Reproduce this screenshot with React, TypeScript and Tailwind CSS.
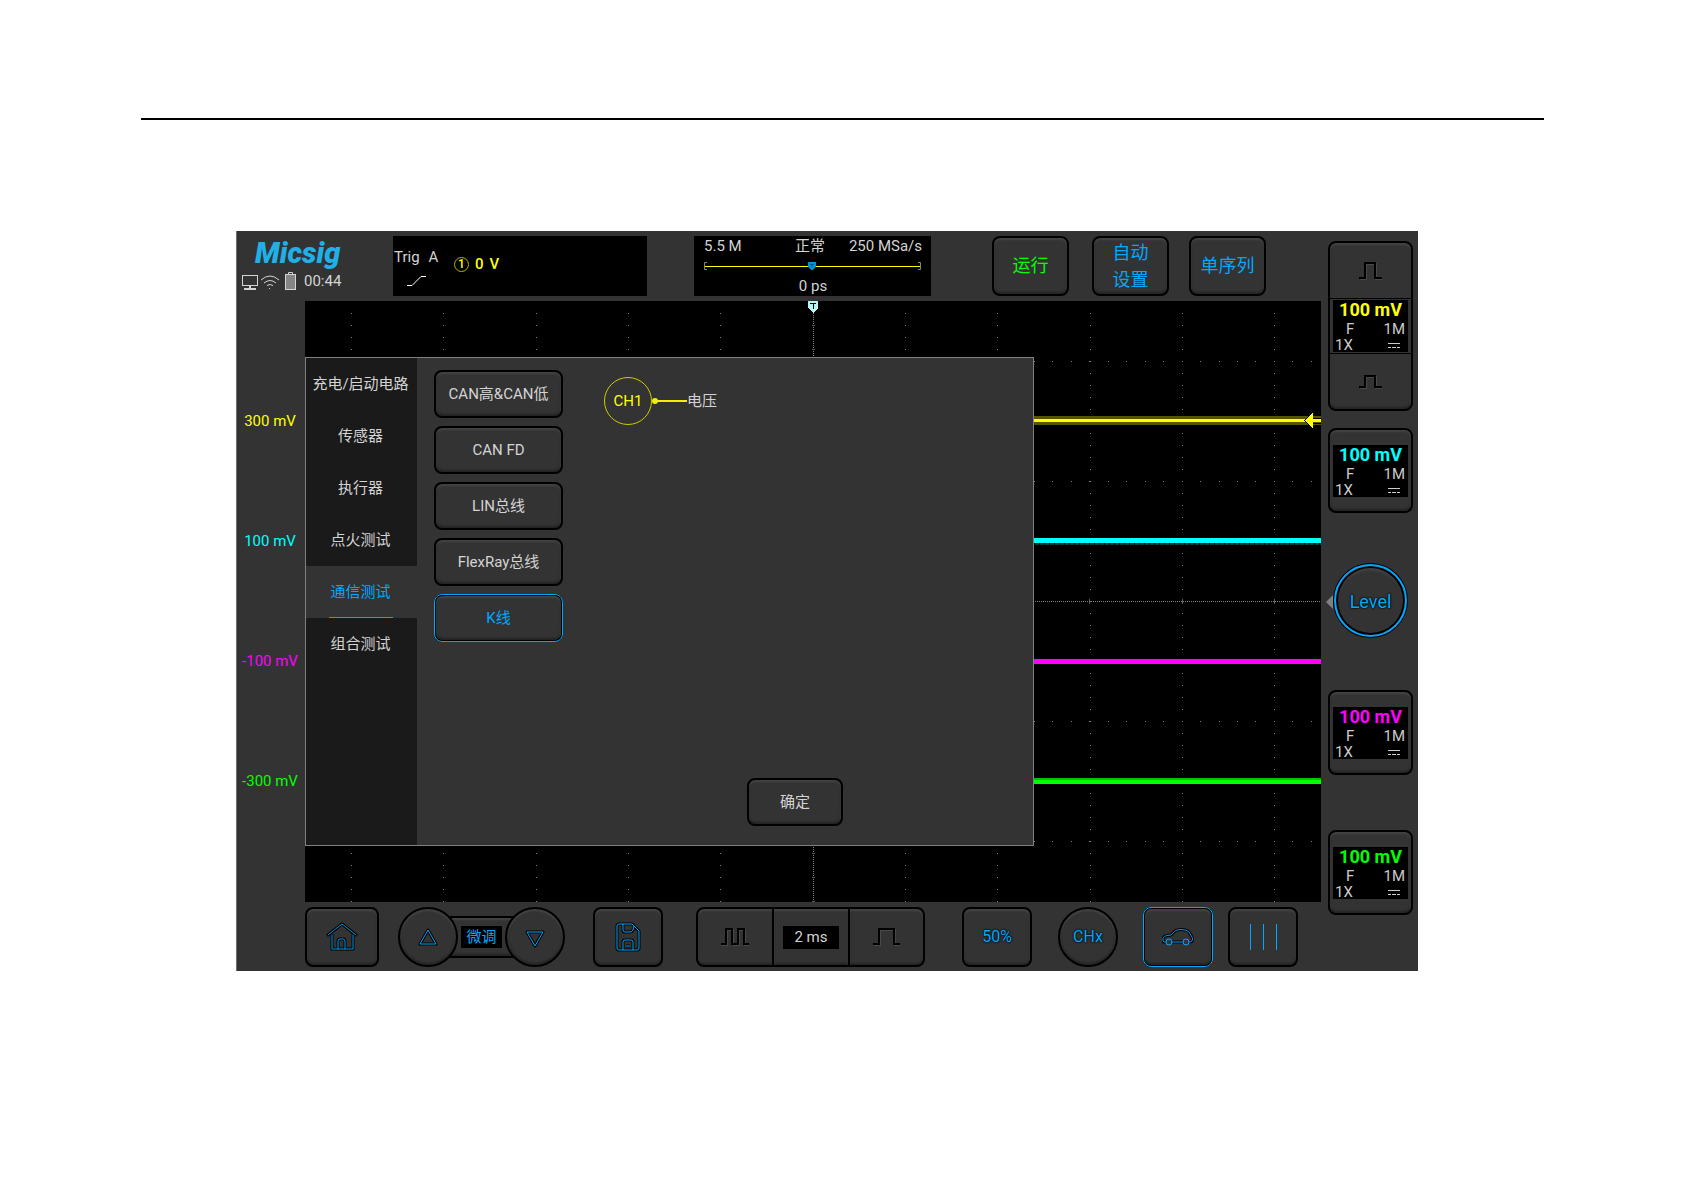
import { useState } from "react";
import type { ReactNode } from "react";
import clsx from "clsx";

const categories = ["充电/启动电路", "传感器", "执行器", "点火测试", "通信测试", "组合测试"];
const busTests = ["CAN高&CAN低", "CAN FD", "LIN总线", "FlexRay总线", "K线"];

const levels = [
  { label: "300 mV", color: "text-[#ffff00]" },
  { label: "100 mV", color: "text-[#00ffff]" },
  { label: "-100 mV", color: "text-[#ff00ff]" },
  { label: "-300 mV", color: "text-[#00ff00]" },
];

const keyStyle =
  "flex items-center justify-center border-2 border-black bg-[#333333] shadow-[inset_0_2px_2px_#444444,inset_0_-2px_2px_#242424]";

interface KeyProps {
  label: string;
  className?: string;
  children: ReactNode;
}

const Key = ({ label, className, children }: KeyProps) => (
  <button aria-label={label} className={clsx(keyStyle, "shrink-0", className)}>
    {children}
  </button>
);

const ChannelReadout = ({ color }: { color: string }) => (
  <span className="block h-[52px] w-[75px] bg-black px-[2px] text-left text-[15px] text-[#cccccc]">
    <span className={clsx("block text-center text-lg leading-[20px] font-bold", color)}>100 mV</span>
    <span className="flex justify-between pr-px pl-[11px] leading-[18px]">
      <span>F</span>
      <span>1M</span>
    </span>
    <span className="flex items-center justify-between pr-[6px] leading-[14px]">
      <span>1X</span>
      <svg width="12" height="6" viewBox="0 0 12 6" shapeRendering="crispEdges">
        <path d="M0 1.5H12M0 5.5H3M4 5.5H8M9 5.5H12" stroke="#cccccc" fill="none" />
      </svg>
    </span>
  </span>
);

// one square pulse, drawn black with a faint light edge
const Pulse = ({ d, width, height }: { d: string; width: number; height: number }) => (
  <svg width={width} height={height} viewBox={`0 0 ${width} ${height}`} fill="none">
    <path d={d} stroke="#484848" strokeWidth="2" transform="translate(1 1)" />
    <path d={d} stroke="#000000" strokeWidth="2" />
  </svg>
);

const StatusIcons = () => (
  <svg width="56" height="20" viewBox="0 0 56 20" fill="none" stroke="#d4d4d4">
    <rect x="0.5" y="4.5" width="15" height="10" />
    <path d="M8 15V18M2 18H14" strokeWidth="2" />
    <path d="M19 9Q28 1 37 9M22 12Q28 7 34 12M25 14.5Q28 12.5 31 14.5" />
    <rect x="27" y="17" width="1" height="1" fill="#d4d4d4" stroke="none" />
    <rect x="43.5" y="3.5" width="10" height="15" fill="#858585" />
    <path d="M46.5 3V1.5H50.5V3" />
  </svg>
);

const TopBar = () => (
  <header className="flex h-[70px] items-start pt-[5px]">
    <div className="w-[156px] shrink-0 pl-[5px]">
      <div className="pl-[13px] text-[29px] leading-[35px] font-black text-[#1fb0e8] italic">Micsig</div>
      <div className="flex items-center gap-[6px] text-[15px] leading-[20px] text-[#d4d4d4]">
        <StatusIcons />
        <span>00:44</span>
      </div>
    </div>

    <div className="flex h-[60px] w-[254px] shrink-0 bg-black text-[15px] text-[#d4d4d4]">
      <div className="w-[61px] pl-px">
        <div className="flex gap-[9px] pt-[11px] leading-[20px]">
          <span>Trig</span>
          <span>A</span>
        </div>
        <svg className="mt-[8px] ml-[13px]" width="20" height="12" viewBox="0 0 20 12" fill="none">
          <path d="M0 10.5H5L14 1.5H19" stroke="#ffffff" />
        </svg>
      </div>
      <div className="flex h-[56px] items-center gap-[6px] font-medium text-[#ffff00]">
        <span className="flex h-[15px] w-[15px] items-center justify-center rounded-full border border-[#b5b500] text-xs leading-none">
          1
        </span>
        <span>0</span>
        <span>V</span>
      </div>
    </div>

    <div className="ml-[47px] h-[60px] w-[237px] shrink-0 bg-black pr-[9px] pl-[10px] text-[15px] text-[#d4d4d4]">
      <div className="flex justify-between leading-[20px]">
        <span className="w-[90px]">5.5 M</span>
        <span>正常</span>
        <span className="w-[96px] text-right">250 MSa/s</span>
      </div>
      <svg className="mt-[5px] w-full" height="10" viewBox="0 0 218 10" fill="none">
        <path d="M3 1.5H0.5V8.5H3M214 1.5H216.5V8.5H214" stroke="#808099" />
        <path d="M1 5.5H216" stroke="#ffff00" />
        <path d="M104 1H112V6L108 9.5L104 6Z" fill="#0090e0" />
        <path d="M106 3.5H110M108 3.5V7" stroke="#005a96" />
      </svg>
      <div className="pt-[5px] text-center leading-[20px]">0 ps</div>
    </div>

    <Key label="运行" className="ml-[61px] h-[60px] w-[77px] rounded-lg text-lg text-[#00ff00]">
      运行
    </Key>
    <Key label="自动设置" className="ml-[23px] h-[60px] w-[77px] rounded-lg px-[18px] text-lg leading-[27px] text-[#00a8ff]">
      自动
      <br />
      设置
    </Key>
    <Key label="单序列" className="ml-[20px] h-[60px] w-[77px] rounded-lg text-lg text-[#00a8ff]">
      单序列
    </Key>
  </header>
);

const columns = [46, 138, 231, 323, 415, 600, 692, 785, 877, 969];
const rows = [60, 180, 420, 540];

const Graticule = () => (
  <svg
    className="block h-full w-full"
    viewBox="0 0 1016 601"
    preserveAspectRatio="none"
    fill="none"
    shapeRendering="crispEdges"
  >
    {columns.map((x) => (
      <path key={x} d={`M${x + 0.5} 12V601`} stroke="#808080" strokeDasharray="1 11" />
    ))}
    {rows.map((y) => (
      <path key={y} d={`M9 ${y + 0.5}H1016`} stroke="#808080" strokeDasharray="1 17.46" />
    ))}
    <path d="M508.5 12V601" stroke="#808080" strokeDasharray="1 1" />
    <path d="M508.5 24V601" stroke="#606060" strokeWidth="3" strokeDasharray="1 23" />
    <path d="M0 300.5H1016" stroke="#808080" strokeDasharray="1 1" />
    <path d="M46 300.5H1016" stroke="#606060" strokeWidth="5" strokeDasharray="1 91.3" />

    <rect y="115" width="1016" height="9" fill="#555500" />
    <rect y="118" width="1016" height="3" fill="#ffff00" />
    <rect y="237" width="1016" height="5" fill="#00ffff" />
    <path d="M0 243H1016" stroke="#003c3c" strokeWidth="2" strokeDasharray="4 1" />
    <rect y="358" width="1016" height="5" fill="#ff00ff" />
    <rect y="477" width="1016" height="3" fill="#00c400" />
    <rect y="479" width="1016" height="4" fill="#00ff00" />

    {/* trigger level and trigger position markers */}
    <path d="M1007 117.5H1016M1007 122.5H1016" stroke="#000000" />
    <path d="M999 119.5L1008 111V128Z" fill="#000000" />
    <path d="M1000 119.5L1008 112V127Z" fill="#ffff00" />
    <path d="M503 0H513V7L508 12L503 7Z" fill="#b8f4f6" />
    <path d="M505 2.5H511M508.5 2V8" stroke="#000000" />
  </svg>
);

const TestDialog = () => {
  const [category, setCategory] = useState("通信测试");
  const [test, setTest] = useState("K线");

  return (
    <section className="absolute top-[56px] left-0 flex h-[489px] w-[729px] border border-[#808080] bg-[#333333] text-[15px] text-[#d4d4d4]">
      <nav className="w-[111px] shrink-0 bg-[#1a1a1a]">
        {categories.map((name) => (
          <button
            key={name}
            onClick={() => setCategory(name)}
            className={clsx(
              "flex h-[52px] w-full flex-col items-center justify-between pt-[2px] pr-[2px]",
              name === category && "bg-[#333333] text-[#00a8ff]"
            )}
          >
            <span className="leading-[49px] whitespace-nowrap">{name}</span>
            <span className={clsx("h-px w-16 shrink-0", name === category && "bg-[#00a8ff]")} />
          </button>
        ))}
      </nav>

      <div className="flex flex-1 flex-col pr-4 pl-[17px]">
        <div className="flex flex-1">
          <div className="flex flex-col gap-2 pt-[12px]">
            {busTests.map((name) => (
              <button
                key={name}
                onClick={() => setTest(name)}
                className={clsx(
                  keyStyle,
                  "h-12 w-[129px] rounded-lg",
                  name === test && "text-[#00a8ff] outline outline-[#00a8ff] -outline-offset-1"
                )}
              >
                {name}
              </button>
            ))}
          </div>

          <div className="flex h-12 items-center self-start pl-[41px] mt-[19px]">
            <span className="flex h-12 w-12 items-center justify-center rounded-full border border-[#cccc00] text-[#ffff00]">
              CH1
            </span>
            <svg width="35" height="6" viewBox="0 0 35 6">
              <circle cx="3" cy="3" r="3" fill="#f0f000" />
              <rect x="3" y="2" width="32" height="2" fill="#f0f000" />
            </svg>
            <span>电压</span>
          </div>
        </div>

        <div className="flex justify-center pb-[19px] pl-[139px]">
          <button className={clsx(keyStyle, "h-12 w-24 rounded-lg")}>确定</button>
        </div>
      </div>
    </section>
  );
};

const carBody =
  "M4 14H2Q1 14 1 12V10Q2 8 5 7.5L9 7L13 3Q15 1.5 19 1.5Q25 1.5 27 4L30 9Q31 11 30 13Q30 14 27 14M10 14H21";
const diskShape =
  "M4 2H17L24 9V26Q24 28 22 28H4Q2 28 2 26V4Q2 2 4 2ZM8 2V8Q8 10 10 10H15Q17 10 18 8L19 4M8 28V20Q8 18 10 18H16Q18 18 18 20V28M11 24H15";
const homeShape = "M2 13L16 2L30 13M6 13V27H27V13M12 27V19Q12 17 14 17H17Q19 17 19 19V27";

const BottomBar = () => (
  <footer className="flex h-[69px] items-start pt-[5px] pl-[68px]">
    <Key label="Home" className="h-[60px] w-[74px] rounded-lg">
      <svg width="32" height="30" viewBox="0 0 32 30" fill="none" strokeLinejoin="round" strokeLinecap="round">
        <path d={homeShape} stroke="#000000" strokeWidth="3" />
        <path d={homeShape} stroke="#0098ea" />
      </svg>
    </Key>

    <div className="ml-[19px] flex shrink-0 items-center">
      <Key label="Up" className="z-10 h-[60px] w-[60px] rounded-full">
        <svg width="20" height="18" viewBox="0 0 20 18" fill="none" strokeLinejoin="round">
          <path d="M10 2L18 16H2Z" stroke="#000000" strokeWidth="3" />
          <path d="M10 2L18 16H2Z" stroke="#00a8ff" />
        </svg>
      </Key>
      <div className={clsx(keyStyle, "-mx-2 h-[42px] w-[63px]")}>
        <span className="bg-black px-[5px] text-[15px] leading-[22px] text-[#00a8ff]">微调</span>
      </div>
      <Key label="Down" className="h-[60px] w-[60px] rounded-full">
        <svg className="mt-[4px]" width="20" height="18" viewBox="0 0 20 18" fill="none" strokeLinejoin="round">
          <path d="M10 16L18 2H2Z" stroke="#000000" strokeWidth="3" />
          <path d="M10 16L18 2H2Z" stroke="#00a8ff" />
        </svg>
      </Key>
    </div>

    <Key label="Save" className="ml-[28px] h-[60px] w-[70px] rounded-lg">
      <svg width="26" height="30" viewBox="0 0 26 30" fill="none" strokeLinejoin="round">
        <path d={diskShape} stroke="#000000" strokeWidth="3" />
        <path d={diskShape} stroke="#00a8ff" />
      </svg>
    </Key>

    <div className="ml-[33px] flex shrink-0">
      <Key label="Slower" className="h-[60px] w-[78px] rounded-l-lg">
        <Pulse width={28} height={18} d="M0 16H5V1H11V16H17V1H23V16H28" />
      </Key>
      <div className={clsx(keyStyle, "h-[60px] w-[74px] border-x-0")}>
        <span className="w-[56px] bg-black text-center text-[15px] leading-[23px] text-[#d4d4d4]">2 ms</span>
      </div>
      <Key label="Faster" className="h-[60px] w-[77px] rounded-r-lg">
        <Pulse width={27} height={18} d="M0 16H6V1H21V16H27" />
      </Key>
    </div>

    <Key
      label="50%"
      className="ml-[37px] h-[60px] w-[70px] rounded-lg text-base text-[#00a8ff] [text-shadow:0_0_2px_black,0_0_2px_black]"
    >
      50%
    </Key>
    <Key
      label="CHx"
      className="ml-[26px] h-[60px] w-[60px] rounded-full text-base text-[#00a8ff] [text-shadow:0_0_2px_black,0_0_2px_black]"
    >
      CHx
    </Key>
    <Key label="Automotive" className="ml-[25px] h-[60px] w-[70px] rounded-lg outline outline-[#00a8ff] -outline-offset-1">
      <svg width="32" height="18" viewBox="0 0 32 18" fill="none" strokeLinejoin="round">
        <path d={carBody} stroke="#000000" strokeWidth="3" />
        <path d={carBody} stroke="#0098ea" />
        <circle cx="7" cy="14" r="3" stroke="#00a8ff" />
        <circle cx="24" cy="14" r="3" stroke="#00a8ff" />
      </svg>
    </Key>
    <Key label="Cursors" className="ml-[15px] h-[60px] w-[70px] rounded-lg">
      <svg width="28" height="26" viewBox="0 0 28 26" shapeRendering="crispEdges">
        <path d="M1.5 0V26M14.5 0V26M27.5 0V26" stroke="#00a8ff" />
      </svg>
    </Key>
  </footer>
);

const ChannelColumn = () => (
  <aside className="flex w-[97px] shrink-0 flex-col pt-[10px] pl-[7px]">
    <div className={clsx(keyStyle, "h-[170px] w-[85px] flex-col rounded-lg")}>
      <button aria-label="CH1 up" className="flex w-full flex-1 items-center justify-center border-b border-black">
        <Pulse width={23} height={18} d="M0 16H6V1H16V16H23" />
      </button>
      <div className="py-px">
        <ChannelReadout color="text-[#ffff00]" />
      </div>
      <button aria-label="CH1 down" className="flex w-full flex-1 items-center justify-center border-t border-black">
        <Pulse width={23} height={14} d="M0 12H6V1H16V12H23" />
      </button>
    </div>
    <Key label="CH2" className="mt-[17px] h-[85px] w-[85px] rounded-lg">
      <ChannelReadout color="text-[#00ffff]" />
    </Key>
    <div className="relative mt-[51px] flex w-[85px] justify-center">
      <svg className="absolute top-[31px] -left-[2px]" width="7" height="14" viewBox="0 0 7 14">
        <path d="M7 0V14L0 7Z" fill="#808080" />
      </svg>
      <button className="h-[73px] w-[73px] rounded-full border-2 border-[#00a8ff] bg-[#333333] pt-[2px] text-lg text-[#00a8ff] shadow-[0_0_0_1px_black,inset_0_0_0_2px_black,inset_0_4px_3px_#444444] [text-shadow:0_0_2px_black,0_0_2px_black]">
        Level
      </button>
    </div>
    <Key label="CH3" className="mt-[53px] h-[85px] w-[85px] rounded-lg">
      <ChannelReadout color="text-[#ff00ff]" />
    </Key>
    <Key label="CH4" className="mt-[55px] h-[85px] w-[85px] rounded-lg">
      <ChannelReadout color="text-[#00ff00]" />
    </Key>
  </aside>
);

const App = () => (
  <div className="min-h-screen bg-white px-[141px] pt-[118px] font-['Roboto','Noto_Sans_CJK_SC',sans-serif]">
    <hr className="border-t-2 border-black" />

    <main className="mt-[111px] mr-[126px] ml-[95px] flex border-l border-[#6e6e6e] bg-[#333333]">
      <div className="min-w-0 flex-1">
        <TopBar />
        <div className="flex h-[601px]">
          <div className="w-[68px] shrink-0 pt-[60px] pr-[2px]">
            {levels.map(({ label, color }) => (
              <div key={label} className={clsx("flex h-[120px] items-center justify-center text-[15px]", color)}>
                {label}
              </div>
            ))}
          </div>
          <div className="relative flex-1 bg-black">
            <Graticule />
            <TestDialog />
          </div>
        </div>
        <BottomBar />
      </div>
      <ChannelColumn />
    </main>
  </div>
);

export default App;
